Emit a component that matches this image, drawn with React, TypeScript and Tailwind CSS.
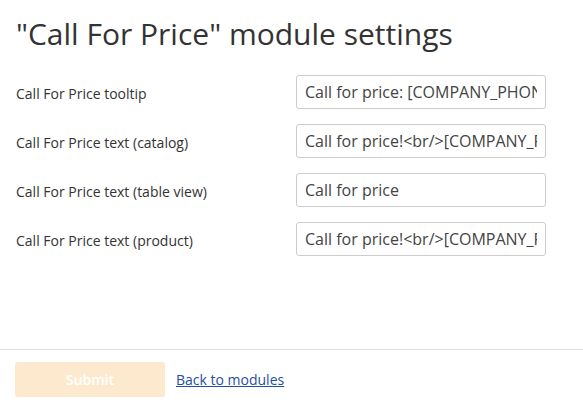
const rows = [
  { label: "Call For Price tooltip", value: "Call for price: [COMPANY_PHONE]" },
  { label: "Call For Price text (catalog)", value: "Call for price!<br/>[COMPANY_PHONE]" },
  { label: "Call For Price text (table view)", value: "Call for price" },
  { label: "Call For Price text (product)", value: "Call for price!<br/>[COMPANY_PHONE]" },
]

export default function App() {
  return (
    <div
      className="w-[583px] h-[408px] bg-white text-[#333] flex flex-col overflow-hidden"
      style={{ fontFamily: '"Open Sans", sans-serif' }}
    >
      <div className="flex-1 px-4">
        <h1 className="text-[30px] leading-none pt-[19px] mb-[26px] text-[#333]">
          "Call For Price" module settings
        </h1>

        {/* settings form */}
        <div className="flex flex-col gap-[15px]">
          {rows.map((r) => (
            <div key={r.label} className="flex items-center">
              <label className="w-[280px] text-[14px] pt-[3px]">{r.label}</label>
              <input
                readOnly
                value={r.value}
                className="w-[250px] h-[34px] border border-[#ccc] rounded-[3px] px-[8px] text-[16px] text-[#444] outline-none"
                style={{ fontFamily: '"Open Sans", sans-serif' }}
              />
            </div>
          ))}
        </div>
      </div>

      <div className="border-t border-[#ddd] h-[59px] px-[15px] flex items-center gap-[11px]">
        <button
          disabled
          className="w-[150px] h-[35px] rounded-[3px] bg-[#fde9cd] text-white text-[14px] font-semibold"
          style={{ fontFamily: '"Open Sans", sans-serif' }}
        >
          Submit
        </button>
        <a href="#" className="text-[14px] text-[#1f4f9e] underline">
          Back to modules
        </a>
      </div>
    </div>
  )
}
